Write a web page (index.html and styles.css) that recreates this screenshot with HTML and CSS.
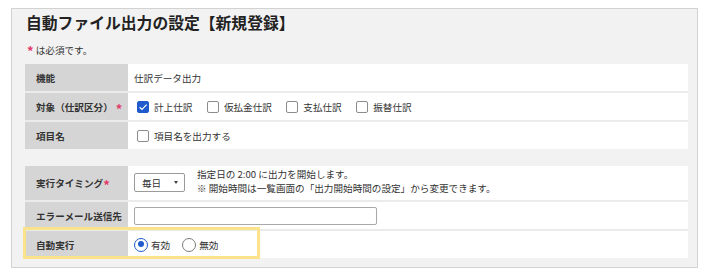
FILE: index.html
```html
<!DOCTYPE html>
<html lang="ja">
<head>
<meta charset="utf-8">
<link rel="stylesheet" href="styles.css">
</head>
<body>
<div class="panel">
  <h1 class="title">自動ファイル出力の設定【新規登録】</h1>
  <p class="note"><span class="req">*</span> は必須です。</p>

  <div class="group">
    <div class="row">
      <div class="label">機能</div>
      <div class="value">仕訳データ出力</div>
    </div>
    <div class="row">
      <div class="label">対象（仕訳区分）<span class="req spaced">*</span></div>
      <div class="value checks">
        <span class="check"><span class="box on"><svg viewBox="0 0 12 12" width="12" height="12"><path d="M2.6 6.2 L5 8.4 L9.6 3.6" fill="none" stroke="#fff" stroke-width="1.2"/></svg></span>計上仕訳</span>
        <span class="check"><span class="box"></span>仮払金仕訳</span>
        <span class="check"><span class="box"></span>支払仕訳</span>
        <span class="check"><span class="box"></span>振替仕訳</span>
      </div>
    </div>
    <div class="row">
      <div class="label">項目名</div>
      <div class="value checks">
        <span class="check"><span class="box"></span>項目名を出力する</span>
      </div>
    </div>
  </div>

  <div class="group second">
    <div class="row tall">
      <div class="label">実行タイミング<span class="req">*</span></div>
      <div class="value timing">
        <span class="select">毎日<span class="caret"></span></span>
        <div class="desc">
          <div>指定日の 2:00 に出力を開始します。</div>
          <div>※ 開始時間は一覧画面の「出力開始時間の設定」から変更できます。</div>
        </div>
      </div>
    </div>
    <div class="row">
      <div class="label">エラーメール送信先</div>
      <div class="value"><span class="input"></span></div>
    </div>
    <div class="row highlighted">
      <div class="label">自動実行</div>
      <div class="value radios">
        <span class="radio"><span class="dot on"></span>有効</span>
        <span class="radio"><span class="dot"></span>無効</span>
      </div>
      <div class="highlight"></div>
    </div>
  </div>
</div>
</body>
</html>
```

FILE: styles.css
```css
html, body {
  margin: 0;
  padding: 0;
  background: #ffffff;
}
body {
  font-family: "Noto Sans CJK JP", "Noto Sans", sans-serif;
  color: #333333;
  font-size: 9.6px;
}
.panel {
  box-sizing: border-box;
  margin: 8px 0 0 11px;
  width: 687px;
  height: 260px;
  background: #f2f2f2;
  border: 1px solid #d2d2d2;
  padding: 3px 9px 0 13px;
}
.title {
  margin: 0;
  font-size: 15.8px;
  line-height: 22px;
  font-weight: 700;
  color: #222222;
  padding-left: 1px;
}
.note {
  margin: 9px 0 0 0;
  font-size: 9.6px;
  line-height: 14px;
  padding-left: 1px;
  color: #333;
}
.req {
  color: #e23a6a;
  font-weight: 700;
  font-size: 13px;
  line-height: 0;
  position: relative;
  top: 2px;
  margin-left: 1px;
}
.label .req {
  margin-left: 0;
}
.label .req.spaced {
  margin-left: 3px;
}
.group {
  margin-top: 7px;
  display: flex;
  flex-direction: column;
  gap: 2px;
  background: #ebebeb;
}
.group.second {
  margin-top: 17px;
}
.row {
  display: grid;
  grid-template-columns: 103px 1fr;
  column-gap: 1px;
  background: #ffffff;
  height: 27px;
}
.row.tall {
  height: 34px;
}
.label {
  background: #d5d5d5;
  font-weight: 700;
  display: flex;
  align-items: center;
  padding-left: 11px;
  color: #333;
}
.value {
  display: flex;
  align-items: center;
  padding-left: 5px;
}
.checks {
  padding-left: 8px;
  gap: 14.5px;
}
.check {
  display: inline-flex;
  align-items: center;
  gap: 5px;
}
.box {
  box-sizing: border-box;
  width: 12px;
  height: 12px;
  border: 1px solid #8c8c8c;
  border-radius: 2px;
  background: #fff;
  display: inline-flex;
}
.box.on {
  background: #1f5bcc;
  border-color: #1f5bcc;
}
.box svg {
  margin: -1px;
}
.timing {
  gap: 12px;
  align-items: flex-start;
  padding-top: 4px;
}
.select {
  box-sizing: border-box;
  margin-top: 3px;
  width: 51px;
  height: 19px;
  border: 1px solid #9a9a9a;
  border-radius: 2px;
  background: #fff;
  display: flex;
  align-items: center;
  padding-left: 7px;
  gap: 13px;
}
.caret {
  width: 0;
  height: 0;
  border-left: 2.5px solid transparent;
  border-right: 2.5px solid transparent;
  border-top: 3px solid #444;
}
.desc {
  line-height: 14px;
  margin-top: -3px;
}
.input {
  box-sizing: border-box;
  width: 243px;
  height: 18px;
  border: 1px solid #a8a8a8;
  border-radius: 2px;
  background: #fff;
}
.highlighted {
  position: relative;
}
.radios {
  gap: 12px;
}
.radio {
  display: inline-flex;
  align-items: center;
  gap: 3px;
}
.dot {
  box-sizing: border-box;
  width: 14px;
  height: 14px;
  border-radius: 50%;
  border: 1px solid #7a7a7a;
  background: #fff;
  position: relative;
}
.dot.on {
  border: 1.5px solid #1f5bcc;
}
.dot.on::after {
  content: "";
  position: absolute;
  left: 2.5px;
  top: 2.5px;
  width: 6px;
  height: 6px;
  border-radius: 50%;
  background: #1f5bcc;
}
.highlight {
  position: absolute;
  box-sizing: border-box;
  left: -2px;
  top: -4px;
  width: 237px;
  height: 32px;
  border: 3px solid #fbe38c;
  pointer-events: none;
}
```
